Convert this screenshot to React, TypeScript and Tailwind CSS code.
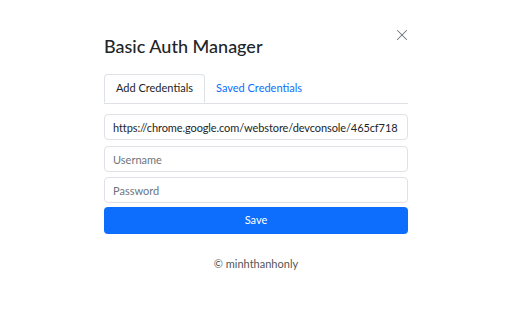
import { X } from 'lucide-react'

const font = { fontFamily: 'Lato, "Noto Sans", sans-serif' }

export default function App() {
  return (
    <div className="w-[512px] h-[320px] bg-white text-[#212529]" style={font}>
      <div className="relative w-[304px] mx-auto pt-[34px]">
        <button className="absolute top-[26px] right-[-3px] text-[#6c757d]">
          <X size={18} strokeWidth={1.4} />
        </button>
        <h1 className="text-[18px] leading-[24px] font-medium">Basic Auth Manager</h1>

        {/* Tabs */}
        <div className="mt-[16px] flex border-b border-[#dee2e6] text-[11px]">
          <div className="h-[29px] -mb-px px-[11px] flex items-center border border-[#dee2e6] border-b-white rounded-t-[4px] bg-white">
            Add Credentials
          </div>
          <div className="h-[29px] px-[11px] flex items-center text-[#0d6efd]">Saved Credentials</div>
        </div>

        {/* Form */}
        <div className="mt-[10px] flex flex-col text-[11px]">
          <input
            className="h-[26px] px-[8px] border border-[#dee2e6] rounded-[4px] outline-none tracking-[-0.1px]"
            defaultValue="https://chrome.google.com/webstore/devconsole/465cf718"
          />
          <input
            className="mt-[6px] h-[26px] px-[8px] border border-[#dee2e6] rounded-[4px] outline-none placeholder:text-[#6c757d]"
            placeholder="Username"
          />
          <input
            className="mt-[5px] h-[26px] px-[8px] border border-[#dee2e6] rounded-[4px] outline-none placeholder:text-[#6c757d]"
            placeholder="Password"
          />
          <button className="mt-[4px] h-[27px] rounded-[4px] bg-[#0d6efd] text-white">Save</button>
        </div>

        <p className="mt-[22px] text-center text-[11px] text-[#555]">© minhthanhonly</p>
      </div>
    </div>
  )
}
